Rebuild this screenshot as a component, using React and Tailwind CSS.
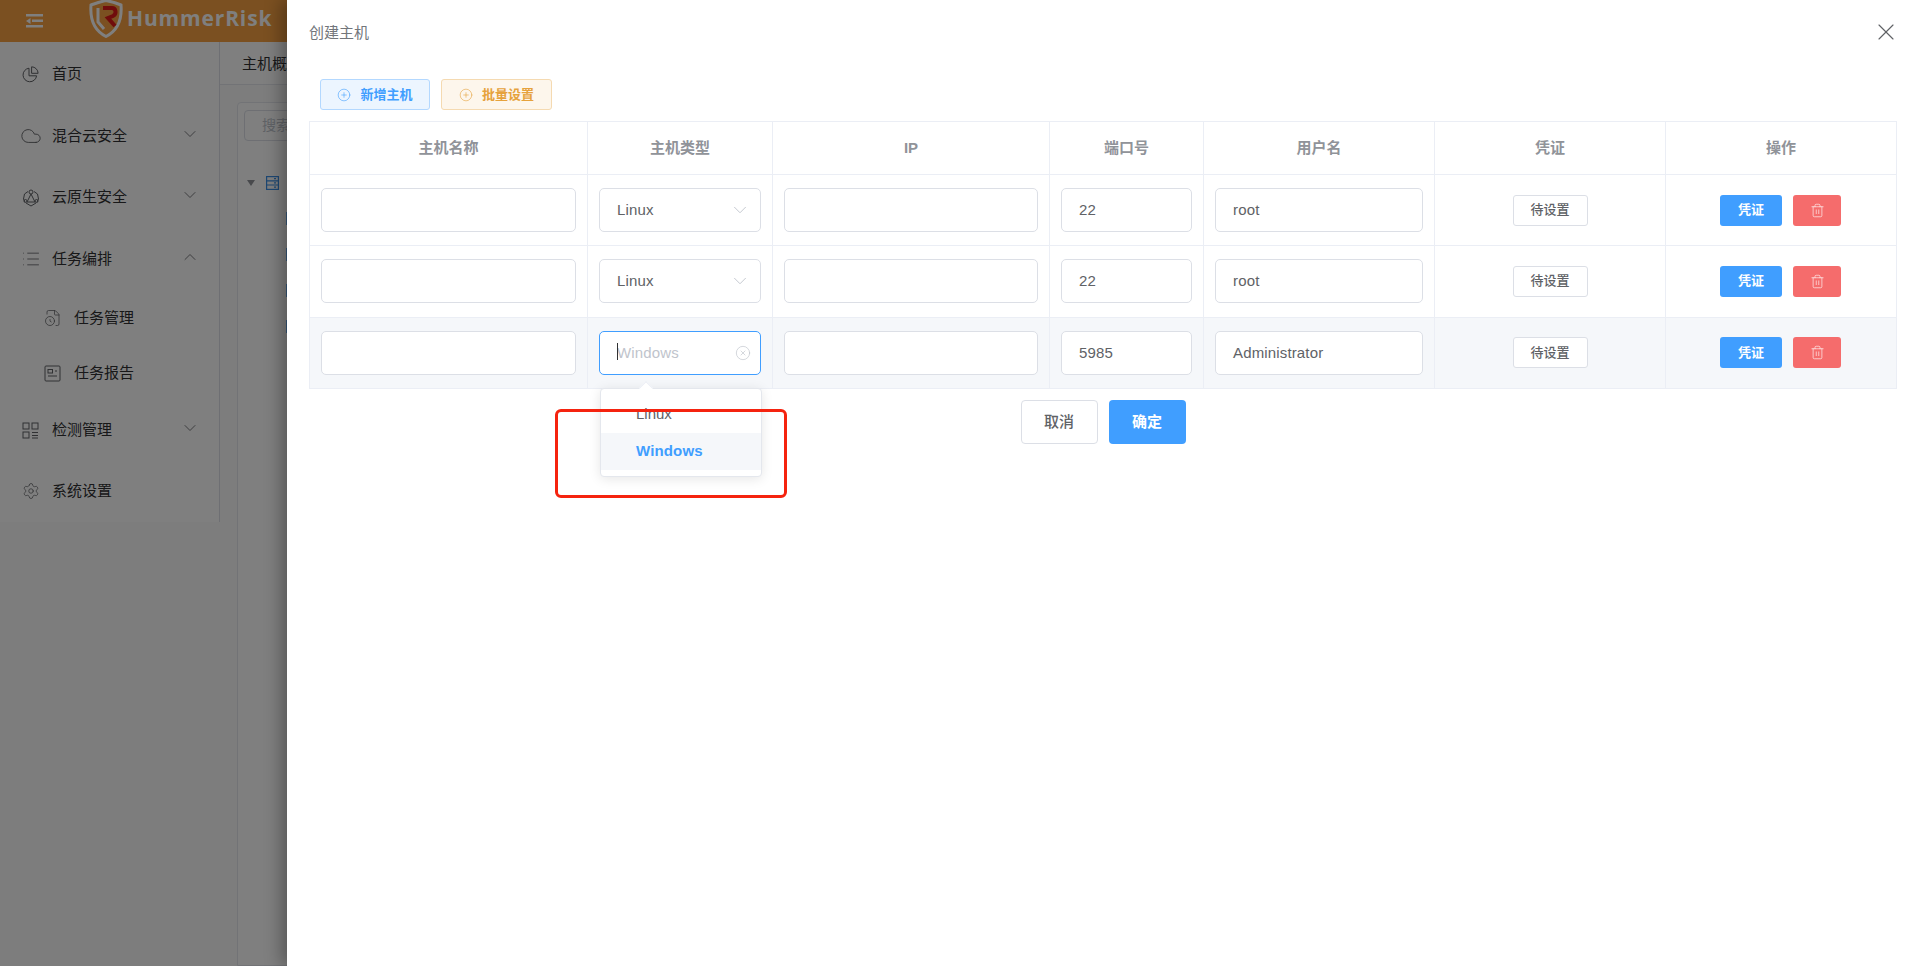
import React from "react";
import { ChevronDown, ChevronUp, Cloud, List, Settings, FileClock, CirclePlus, CircleX, Trash2, X } from "lucide-react";

const PieIcon = () => (
  <svg width="17" height="17" viewBox="0 0 17 17" fill="none" stroke="currentColor" strokeWidth="1">
    <path d="M7 2.2a6.8 6.8 0 1 0 7.6 7.6H7z" />
    <path d="M9.6 0.8a6.6 6.6 0 0 1 6.5 6.5H9.6z" />
  </svg>
);

const NativeIcon = () => (
  <svg width="18" height="18" viewBox="0 0 18 18" fill="none" stroke="currentColor" strokeWidth="1">
    <circle cx="9" cy="3" r="2" />
    <path d="M9 5l-4 8h8zM6 2.5L2.5 5 1.5 10l1.5 3M12 2.5L15.500 5l1 5-1.500 3M4 14l5 3 5-3" />
    <circle cx="3.500" cy="12" r="1.500" />
    <circle cx="14.500" cy="12" r="1.500" />
  </svg>
);

const ReportIcon = () => (
  <svg width="17" height="17" viewBox="0 0 17 17" fill="none" stroke="currentColor" strokeWidth="1">
    <rect x="1" y="1" width="15" height="15" rx="1" />
    <rect x="4" y="4.500" width="4.500" height="3.500" />
    <path d="M4 11h9M11 6h2" />
  </svg>
);

const GridIcon = () => (
  <svg width="17" height="17" viewBox="0 0 17 17" fill="none" stroke="currentColor" strokeWidth="1">
    <rect x="1" y="1" width="6" height="6" />
    <rect x="10" y="1" width="6" height="6" />
    <rect x="1" y="10" width="6" height="6" />
    <path d="M10 10.500h6M10 13.500h6M10 16h6" />
  </svg>
);

const menu = [
  { label: "首页", icon: <PieIcon />, h: "h-[62px]" },
  { label: "混合云安全", icon: <Cloud size={22} strokeWidth={1} className="-ml-[2px]" />, h: "h-[62px]", arrow: "down" },
  { label: "云原生安全", icon: <NativeIcon />, h: "h-[61px]", arrow: "down" },
  { label: "任务编排", icon: <List size={20} strokeWidth={1} className="-ml-[1px]" />, h: "h-[62px]", arrow: "up" },
  { label: "任务管理", icon: <FileClock size={18} strokeWidth={1} />, h: "h-[56px]", sub: true },
  { label: "任务报告", icon: <ReportIcon />, h: "h-[55px]", sub: true },
  { label: "检测管理", icon: <GridIcon />, h: "h-[59px]", arrow: "down" },
  { label: "系统设置", icon: <Settings size={18} strokeWidth={1} />, h: "h-[62px]" },
];

const rows = [
  { type: "Linux", port: "22", user: "root", h: "h-[71px]" },
  { type: "Linux", port: "22", user: "root", h: "h-[72px]" },
  { type: "Windows", port: "5985", user: "Administrator", h: "h-[71px] bg-[#f5f7fa]", active: true },
];

function Logo() {
  return (
    <svg width="36" height="38" viewBox="0 0 36 38" fill="none">
      <path d="M3 5C9 3 13 1.500 18 0.500 23 1.500 28 3 33 5 34 18 31 30 18 36.500 5 30 2 18 3 5z" stroke="#fff" strokeWidth="3" />
      <path d="M10 8v14l6 7" stroke="#fff" strokeWidth="3" />
      <path d="M15 8h9c4 0 5 6 1 8l-5 2 7 8" stroke="#e01818" strokeWidth="4" />
    </svg>
  );
}

function Sidebar() {
  return (
    <aside className="w-[220px] h-[480px] shrink-0 pt-[1px] bg-white border-r border-[#dcdfe6]">
      {menu.map((item) => (
        <div key={item.label} className={`${item.h} flex items-center text-[#303133] text-[15px] ${item.sub ? "pl-[44px]" : "pl-[22px]"}`}>
          <span className="w-[30px] flex justify-start text-[#606266]">{item.icon}</span>
          <span className="flex-1">{item.label}</span>
          {item.arrow === "down" && <ChevronDown size={20} strokeWidth={1} className="mr-[19px] mb-[5px] text-[#606266]" />}
          {item.arrow === "up" && <ChevronUp size={20} strokeWidth={1} className="mr-[19px] mb-[5px] text-[#606266]" />}
        </div>
      ))}
    </aside>
  );
}

function Background() {
  return (
    <div className="flex flex-col h-[966px]">
      <header className="h-[42px] shrink-0 bg-[#f6a042] flex items-center text-white">
        <svg className="ml-[26px]" width="17" height="14" viewBox="0 0 17 14" fill="#fff">
          <rect x="0" y="0" width="17" height="2.500" />
          <rect x="6" y="5.500" width="11" height="2.500" />
          <rect x="0" y="11" width="17" height="2.500" />
          <path d="M4.500 4v6L0 7z" />
        </svg>
        <div className="ml-[45px] mb-[4px]"><Logo /></div>
        <span className="ml-[3px] mb-[4px] text-[21px] font-bold tracking-[0.85px] font-['Open_Sans',sans-serif]">HummerRisk</span>
      </header>
      <div className="flex flex-1 min-h-0 bg-[#fbfbfb]">
        <Sidebar />
        <main className="flex-1 flex flex-col min-w-0">
          <div className="h-[43px] shrink-0 bg-white border-b border-[#e4e7ed] pl-[22px] pt-[2px] flex items-center text-[15px] text-[#303133]">主机概览</div>
          <div className="flex-1 ml-[17px] mt-[17px] bg-white border border-[#e4e7ed] rounded-tl-[4px] pl-[6px] pt-[7px]">
            <div className="w-[300px] h-[31px] border border-[#dcdfe6] rounded-[4px] pl-[17px] flex items-center text-[14px] text-[#c0c4cc]">搜索</div>
            <div className="mt-[35px] ml-[3px] flex items-center gap-[11px]">
              <span className="w-0 h-0 border-x-[4px] border-x-transparent border-t-[6px] border-t-[#909399]" />
              <svg width="13" height="14" viewBox="0 0 13 14" fill="none" stroke="#3a8ee6" strokeWidth="1.200">
                <rect x="0.600" y="0.600" width="11.800" height="12.800" />
                <path d="M0.600 4.800h11.800M0.600 9h11.800M8 2.700h2M8 6.900h2M8 11.200h2" />
              </svg>
            </div>
            <div className="ml-[42px] mt-[22px] flex flex-col gap-[23px]">
              {[0, 1, 2, 3].map((i) => <div key={i} className="w-[13px] h-[13px] bg-[#6fb1f5]" />)}
            </div>
          </div>
        </main>
      </div>
    </div>
  );
}

const inputClass = "h-[44px] bg-white border border-[#dcdfe6] rounded-[5px] pl-[17px] flex items-center text-[15px] tracking-[0.15px] text-[#606266]";

function TypeSelect({ row }) {
  if (!row.active) {
    return (
      <div className={`${inputClass} justify-between pr-[9px]`}>
        {row.type}
        <ChevronDown size={22} strokeWidth={1} className="text-[#c0c4cc]" />
      </div>
    );
  }
  return (
    <div className="relative">
      <div className={`${inputClass} justify-between pr-[9px] !border-[#409eff]`}>
        <span className="relative text-[#c0c4cc]">
          Windows
          <span className="absolute left-0 top-[1px] w-px h-[17px] bg-[#303133]" />
        </span>
        <CircleX size={16} strokeWidth={1} className="text-[#c0c4cc]" />
      </div>
      <div className="absolute left-[1px] top-[57px] w-[162px] h-[89px] bg-white border border-[#e4e7ed] rounded-[4px] shadow-[0_2px_12px_rgba(0,0,0,0.1)] pt-[6px] z-10">
        <span className="absolute left-[40px] -top-[6px] w-[10px] h-[10px] rotate-45 bg-white border-l border-t border-[#ebeef5]" />
        <div className="h-[38px] pl-[35px] flex items-center text-[15px] text-[#606266]">Linux</div>
        <div className="h-[37px] pl-[35px] flex items-center text-[15px] font-bold tracking-[0.15px] text-[#409eff] bg-[#f5f7fa]">Windows</div>
      </div>
      <div className="absolute -left-[44px] top-[78px] w-[232px] h-[89px] border-[3px] border-[#f5230f] rounded-[6px] z-20" />
    </div>
  );
}

function HostTable() {
  const th = "border border-[#ebeef5] h-[53px] text-[15px] font-bold text-[#909399] text-center";
  return (
    <table className="w-[1587px] table-fixed border-collapse">
      <colgroup>
        <col className="w-[278px]" />
        <col className="w-[185px]" />
        <col className="w-[277px]" />
        <col className="w-[154px]" />
        <col className="w-[231px]" />
        <col className="w-[231px]" />
        <col className="w-[231px]" />
      </colgroup>
      <thead>
        <tr>
          {["主机名称", "主机类型", "IP", "端口号", "用户名", "凭证", "操作"].map((t) => (
            <th key={t} className={th}>{t}</th>
          ))}
        </tr>
      </thead>
      <tbody>
        {rows.map((row, i) => {
          // the middle row is 1px taller but its content sits on the upper pixel
          const td = `border border-[#ebeef5] px-[11px] ${i === 1 ? "pb-[1px]" : ""}`;
          const lift = row.active ? "pb-[1px]" : "";
          return (
            <tr key={i} className={row.h}>
              <td className={td}><div className={inputClass} /></td>
              <td className={td}><TypeSelect row={row} /></td>
              <td className={td}><div className={inputClass} /></td>
              <td className={td}><div className={inputClass}>{row.port}</div></td>
              <td className={td}><div className={inputClass}>{row.user}</div></td>
              <td className={td}>
                <div className={`flex justify-center ${lift}`}>
                  <button className="w-[75px] h-[31px] bg-white border border-[#dcdfe6] rounded-[3px] text-[13px] text-[#606266] font-medium">待设置</button>
                </div>
              </td>
              <td className={td}>
                <div className={`flex justify-center gap-[11px] pr-[1px] ${lift}`}>
                  <button className="w-[62px] h-[31px] bg-[#409eff] rounded-[3px] text-[13px] font-bold text-white">凭证</button>
                  <button className="w-[48px] h-[31px] bg-[#f56c6c] rounded-[3px] text-white flex items-center justify-center"><Trash2 size={15} strokeWidth={1} /></button>
                </div>
              </td>
            </tr>
          );
        })}
      </tbody>
    </table>
  );
}

function Drawer() {
  return (
    <section className="absolute top-0 right-0 bottom-0 w-[1631px] bg-white shadow-[-6px_0_16px_rgba(0,0,0,0.3)] pl-[22px] pr-[21px]">
      <div className="h-[66px] pt-[23px] flex justify-between items-start text-[15px] leading-[20px] text-[#72767b]">
        <span>创建主机</span>
        <X size={28} strokeWidth={1} className="-mr-[3px] -mt-[5px] text-[#606266]" />
      </div>
      <div className="ml-[11px] mt-[13px] flex gap-[11px]">
        <button className="w-[110px] h-[31px] bg-[#ecf5ff] border border-[#b3d8ff] rounded-[3px] flex items-center justify-center gap-[9px] text-[13px] font-bold text-[#409eff]">
          <CirclePlus size={14} strokeWidth={1} />新增主机
        </button>
        <button className="w-[111px] h-[31px] bg-[#fdf6ec] border border-[#f5dab1] rounded-[3px] flex items-center justify-center gap-[9px] text-[13px] font-bold text-[#e6a23c]">
          <CirclePlus size={14} strokeWidth={1} />批量设置
        </button>
      </div>
      <div className="mt-[11px]"><HostTable /></div>
      <div className="mt-[11px] flex justify-center gap-[11px]">
        <button className="w-[77px] h-[44px] bg-white border border-[#dcdfe6] rounded-[4px] text-[15px] font-medium text-[#606266]">取消</button>
        <button className="w-[77px] h-[44px] bg-[#409eff] rounded-[4px] text-[15px] font-bold text-white">确定</button>
      </div>
    </section>
  );
}

export default function App() {
  return (
    <div className="relative w-[1918px] h-[966px] overflow-hidden font-['Liberation_Sans','Noto_Sans_CJK_SC',sans-serif]">
      <Background />
      <div className="absolute inset-0 bg-black/50" />
      <Drawer />
    </div>
  );
}
